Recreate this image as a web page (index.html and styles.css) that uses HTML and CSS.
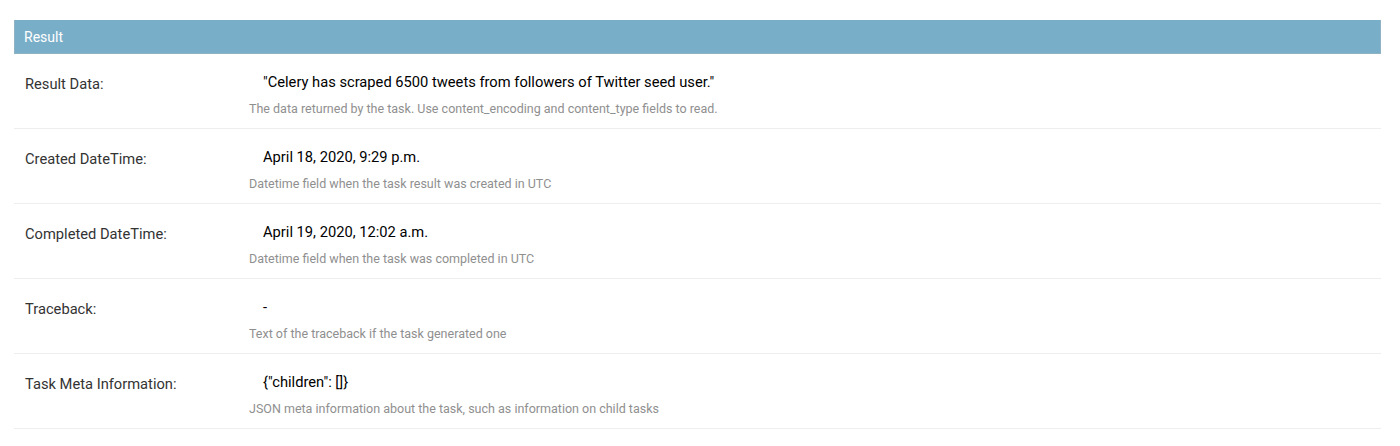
FILE: index.html
```html
<!DOCTYPE html>
<html lang="en">
<head>
<meta charset="utf-8">
<title>Result</title>
<link rel="stylesheet" href="styles.css">
</head>
<body>
<fieldset class="module">
  <h2 class="module-title">Result</h2>
  <div class="form-row">
    <div class="field-label">Result Data:</div>
    <div class="field-body">
      <div class="readonly">"Celery has scraped 6500 tweets from followers of Twitter seed user."</div>
      <div class="help">The data returned by the task. Use content_encoding and content_type fields to read.</div>
    </div>
  </div>
  <div class="form-row">
    <div class="field-label">Created DateTime:</div>
    <div class="field-body">
      <div class="readonly">April 18, 2020, 9:29 p.m.</div>
      <div class="help">Datetime field when the task result was created in UTC</div>
    </div>
  </div>
  <div class="form-row">
    <div class="field-label">Completed DateTime:</div>
    <div class="field-body">
      <div class="readonly">April 19, 2020, 12:02 a.m.</div>
      <div class="help">Datetime field when the task was completed in UTC</div>
    </div>
  </div>
  <div class="form-row">
    <div class="field-label">Traceback:</div>
    <div class="field-body">
      <div class="readonly">-</div>
      <div class="help">Text of the traceback if the task generated one</div>
    </div>
  </div>
  <div class="form-row">
    <div class="field-label">Task Meta Information:</div>
    <div class="field-body">
      <div class="readonly">{"children": []}</div>
      <div class="help">JSON meta information about the task, such as information on child tasks</div>
    </div>
  </div>
</fieldset>
</body>
</html>
```

FILE: styles.css
```css
html, body {
  margin: 0;
  padding: 0;
  background: #fff;
}

body {
  font-family: Roboto, "Liberation Sans", sans-serif;
  padding: 20px 19px 0 14px;
}

.module {
  margin: 0;
  padding: 0;
  border: 0;
  min-width: 0;
}

.module-title {
  margin: 0;
  height: 34px;
  line-height: 34px;
  padding: 0 0 0 10px;
  background: #79aec8;
  color: #fff;
  font-size: 14px;
  font-weight: 400;
  box-shadow: inset 1px 0 0 #8fb2c4, inset -1px 0 0 #8fb2c4, inset 0 -1px 0 #8fb2c4;
}

.form-row {
  display: flex;
  border-bottom: 1px solid #eee;
  padding: 18px 0 0 11px;
  box-sizing: content-box;
  height: 56px;
}

.field-label {
  width: 224px;
  flex: none;
  padding-top: 2px;
  font-size: 14.7px;
  line-height: 20px;
  color: #333;
}

.field-body {
  display: flex;
  flex-direction: column;
}

.readonly {
  padding-left: 14px;
  font-size: 14.7px;
  line-height: 20px;
  color: #000;
}

.help {
  margin-top: 9px;
  font-size: 12.5px;
  line-height: 16px;
  color: #8f8f8f;
}
```
